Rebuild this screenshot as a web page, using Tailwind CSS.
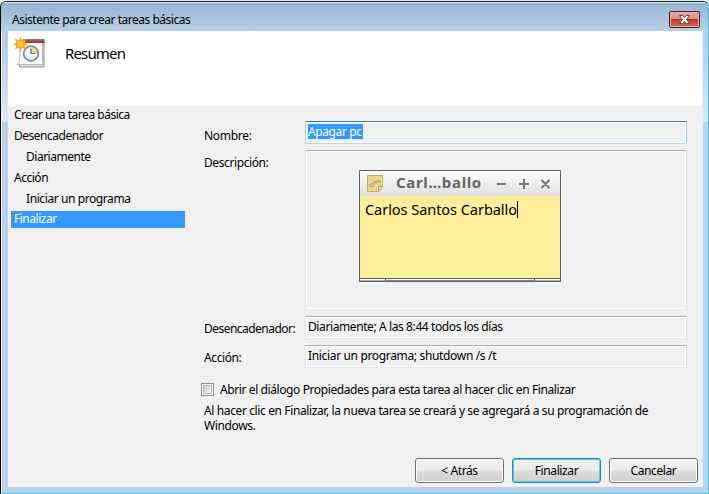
<!DOCTYPE html>
<html lang="es">
<head>
<meta charset="utf-8">
<title>Asistente para crear tareas básicas</title>
<script src="https://cdn.jsdelivr.net/npm/@tailwindcss/browser@4"></script>
</head>
<body class="w-[709px] h-[494px] overflow-hidden bg-[#e3efe9] pt-px font-['Noto_Sans','Open_Sans',sans-serif] text-[12px] leading-[17px] text-black whitespace-nowrap">
<div class="relative w-[709px] h-[493px] flex flex-col rounded-tl-[6px] rounded-tr-[6px] overflow-hidden bg-[linear-gradient(to_bottom,#b5cde8_0px,#b5cde8_40px,#dce9f7_119px,#b9d1ea_120px)] border-l border-l-black border-r border-r-[#2fc8e8] border-b border-b-[#2fc8e8] border-t border-t-[#1c2a25] shadow-[inset_1px_0_0_0_#eaf3fb]">
  <header class="h-[29px] shrink-0 flex items-center justify-between bg-linear-to-b from-[#98b3d1] to-[#b8d0e9] border-t border-t-[#d5e5f3] pl-[11px] pr-[8px]">
    <h1 class="tracking-[-0.48px] pt-[5px]">Asistente para crear tareas básicas</h1>
    <button aria-label="Cerrar" class="w-[31px] h-[17px] mt-[5px] flex items-center justify-center rounded-[2px] border border-[#431c2b] shadow-[inset_0_0_0_1px_#eeb3a8] bg-[linear-gradient(to_bottom,#e5a99c_0%,#d98d7d_48%,#b93a22_50%,#d0705a_100%)]">
      <svg width="13" height="11" viewBox="0 0 13 11"><path d="M1.500 1.500h3.200l1.800 2 1.800-2h3.200L8.500 5.400l3.100 4.100H8.300L6.500 7.400 4.700 9.500H1.400l3.100-4.100z" fill="#f8f8f8" stroke="#514b5d" stroke-width="1"/></svg>
    </button>
  </header>
  <div class="flex flex-1 min-h-0 flex-col ml-[7px] mr-[5px] mb-[6px] bg-[#f0f0f0] border-r border-r-[#e6f0fa]">
    <section class="h-[75px] shrink-0 bg-white flex pl-[5px]">
      <svg class="mt-[5px]" width="33" height="33" viewBox="0 0 33 33">
        <defs><linearGradient id="cap" x2="0" y2="1"><stop stop-color="#ad7466"/><stop offset="1" stop-color="#7f3d2d"/></linearGradient></defs>
        <path d="M6.500 26v5H31V6" fill="#dcdcdc" stroke="#8d8d8d"/>
        <path d="M7.500 6.500h22v19l1 3H4l2.500-3z" fill="#f8f8f8" stroke="#bbb"/>
        <path d="M10 3h21.500v4H8z" fill="url(#cap)"/>
        <circle cx="18" cy="17.500" r="7.300" fill="#f1f6fa" stroke="#7e8992" stroke-width="1.700"/>
        <path d="M18 11.500a6 6 0 0 1 6 6h-6z" fill="#f5d489"/>
        <path d="M18 12.500v5h4.500" fill="none" stroke="#667078" stroke-width="1.200"/>
        <path d="M7.500 1l1.600 3.700L13 2.800l-1.100 3.900 3.300 1.500-3.400 1.600 1.100 3.800-3.800-1.900L7.500 15l-1.600-3.400-3.900 1.900 1.400-3.800L0 8.200l3.400-1.500L2 2.800l3.900 1.900z" fill="#f5a81f"/>
        <circle cx="7.500" cy="8" r="3" fill="#ffc636"/>
      </svg>
      <h2 class="ml-[19px] mt-[11px] text-[15px] leading-[22px] tracking-[-0.85px]">Resumen</h2>
    </section>
    <div class="flex flex-1 min-h-0">
      <nav class="w-[177px] ml-[3px] shrink-0 flex flex-col gap-[4px] tracking-[-0.48px]">
        <div class="h-[17px] pl-[3px]">Crear una tarea básica</div>
        <div class="h-[17px] pl-[3px]">Desencadenador</div>
        <div class="h-[17px] pl-[15px]">Diariamente</div>
        <div class="h-[17px] pl-[3px]">Acción</div>
        <div class="h-[17px] pl-[15px] tracking-[-0.41px]">Iniciar un programa</div>
        <div class="h-[17px] w-[174px] pl-[3px] bg-[#3399ff] text-white leading-[16px]">Finalizar</div>
      </nav>
      <main class="flex flex-col flex-1 pl-[16px] pt-[15px] tracking-[-0.4px]">
        <div class="grid grid-cols-[101px_382px] grid-rows-[23px_160px_23px_23px] gap-y-[6px]">
          <label class="pt-[6px] tracking-[-0.3px]">Nombre:</label>
          <div class="border border-t-[#3d7bad] border-l-[#a9cbe4] border-b-[#b7d9ed] border-r-[#a4c9e3] rounded-[1px] shadow-[inset_0_0_0_1px_#fff] pl-[2px] pt-[2px]"><span class="inline-block h-[15px] w-[55px] leading-[15px] bg-[#3399ff] text-white align-top">Apagar pc</span></div>
          <label class="pt-[4px]">Descripción:</label>
          <div class="border border-t-[#abadb3] border-l-[#e2e3ea] border-b-[#e3e9ef] border-r-[#dbdfe6] rounded-[1px] shadow-[inset_0_0_0_1px_#fff] pl-[53px] pt-[19px]">
            <article class="w-[202px] h-[112px] border border-[#606060] bg-[#ffee9a] flex flex-col text-[#111]">
              <div class="h-[25px] shrink-0 flex items-center bg-linear-to-b from-white to-[#dedede] text-[#666]">
                <svg class="ml-[7px]" width="17" height="17" viewBox="0 0 17 17"><path d="M.5.500h15v11l-4 5H.500z" fill="#ead58a" stroke="#c6ae65"/><path d="M15.500 11.500h-4v5z" fill="#fff3bd" stroke="#b79f55"/><path d="M2 10.500l3-2 1 1 2-3 1 1.500 2-3 1 2 2-.5M3 12l4-1.500" fill="none" stroke="#9d8748" stroke-width=".8"/></svg>
                <b class="ml-[12px] w-[87px] -mt-[3px] text-[15px] leading-[20px] tracking-[0.65px]">Carl…ballo</b>
                <svg class="ml-[13px]" width="55" height="12" viewBox="0 0 55 12" fill="none" stroke="#777" stroke-width="2"><path d="M1 6h9M23 6h10M28 1v10M45.500 2l8 8M53.500 2l-8 8"/></svg>
              </div>
              <div class="flex-1 pl-[5px] pt-[5px] text-[14.500px] leading-[18px] tracking-[-0.04px] text-black"><span class="inline-block h-[17px] leading-[17px] border-r border-black align-top">Carlos Santos Carballo</span></div>
              <div class="h-[3px] shrink-0 border-t border-[#606060] bg-white flex justify-between"><i class="w-[26px] border-r border-b border-b-[#aaa] border-r-[#606060]"></i><i class="flex-1 border-b border-[#8b8390]"></i><i class="w-[26px] border-l border-b border-b-[#aaa] border-l-[#606060]"></i></div>
            </article>
          </div>
          <label class="pt-[4px] tracking-[-0.53px]">Desencadenador:</label>
          <div class="border border-t-[#abadb3] border-l-[#e2e3ea] border-b-[#e3e9ef] border-r-[#dbdfe6] rounded-[1px] shadow-[inset_0_0_0_1px_#fff] pl-[2px] pt-px">Diariamente; A las 8:44 todos los días</div>
          <label class="pt-[4px]">Acción:</label>
          <div class="border border-t-[#abadb3] border-l-[#e2e3ea] border-b-[#e3e9ef] border-r-[#dbdfe6] rounded-[1px] shadow-[inset_0_0_0_1px_#fff] pl-[2px] pt-px tracking-[-0.34px]">Iniciar un programa; shutdown /s /t</div>
        </div>
        <label class="flex items-center h-[17px] mt-[13px] -ml-[3px]"><span class="w-[13px] h-[13px] mr-[6px] border border-[#8e8f8f] bg-[#f4f4f4] p-[1px]"><i class="block w-full h-full border border-[#b5bac1] bg-linear-to-br from-[#cbcfd5] to-[#f6f6f6]"></i></span>Abrir el diálogo Propiedades para esta tarea al hacer clic en Finalizar</label>
        <p class="mt-[5px] leading-[15px] tracking-[-0.38px]">Al hacer clic en Finalizar, la nueva tarea se creará y se agregará a su programación de<br>Windows.</p>
        <div class="mt-auto mb-[4px] mr-[4px] flex justify-end gap-[8px]">
          <button class="w-[89px] h-[25px] rounded-[3px] border border-[#707070] shadow-[inset_0_0_0_1px_#fcfcfc] bg-[linear-gradient(to_bottom,#f2f2f2_0%,#ebebeb_49%,#dddddd_51%,#cfcfcf_100%)]">&lt; Atrás</button>
          <button class="w-[89px] h-[25px] rounded-[3px] border border-[#3c7fb1] shadow-[inset_0_0_0_1px_#48cff4] bg-[linear-gradient(to_bottom,#f2f2f2_0%,#ebebeb_49%,#dddddd_51%,#cfcfcf_100%)]">Finalizar</button>
          <button class="w-[89px] h-[25px] rounded-[3px] border border-[#707070] shadow-[inset_0_0_0_1px_#fcfcfc] bg-[linear-gradient(to_bottom,#f2f2f2_0%,#ebebeb_49%,#dddddd_51%,#cfcfcf_100%)]">Cancelar</button>
        </div>
      </main>
    </div>
  </div>
</div>
</body>
</html>
